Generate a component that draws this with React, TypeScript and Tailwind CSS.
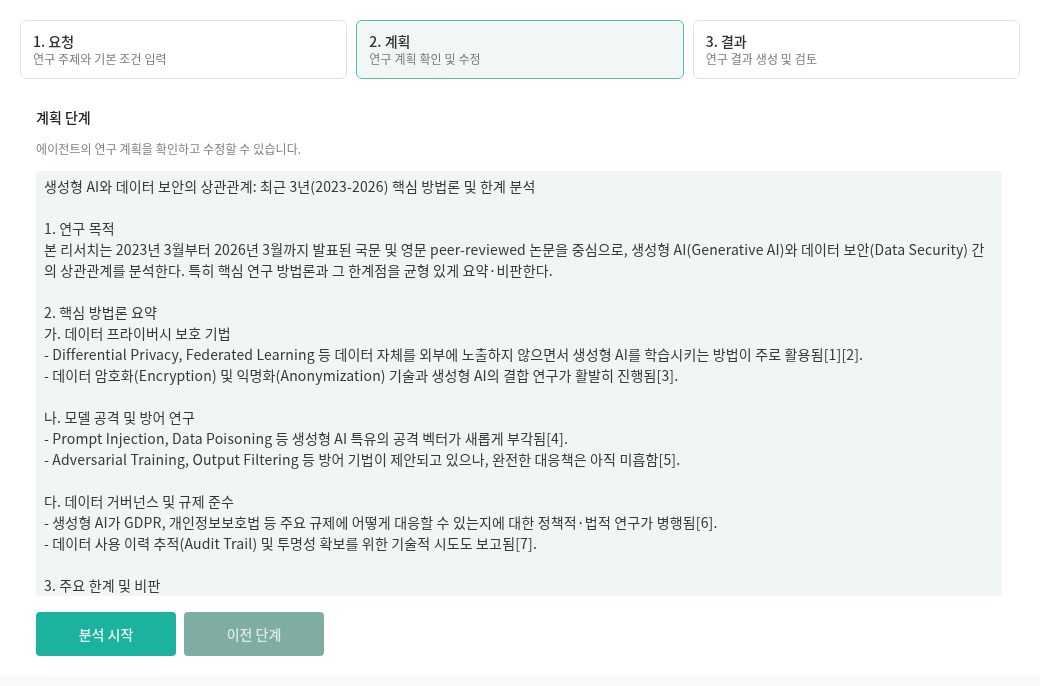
import { useState } from 'react';

const STEPS = [
  { title: '1. 요청', desc: '연구 주제와 기본 조건 입력' },
  { title: '2. 계획', desc: '연구 계획 확인 및 수정' },
  { title: '3. 결과', desc: '연구 결과 생성 및 검토' },
];

const PLAN = `생성형 AI와 데이터 보안의 상관관계: 최근 3년(2023-2026) 핵심 방법론 및 한계 분석

1. 연구 목적
본 리서치는 2023년 3월부터 2026년 3월까지 발표된 국문 및 영문 peer-reviewed 논문을 중심으로, 생성형 AI(Generative AI)와 데이터 보안(Data Security) 간의 상관관계를 분석한다. 특히 핵심 연구 방법론과 그 한계점을 균형 있게 요약·비판한다.

2. 핵심 방법론 요약
가. 데이터 프라이버시 보호 기법
- Differential Privacy, Federated Learning 등 데이터 자체를 외부에 노출하지 않으면서 생성형 AI를 학습시키는 방법이 주로 활용됨[1][2].
- 데이터 암호화(Encryption) 및 익명화(Anonymization) 기술과 생성형 AI의 결합 연구가 활발히 진행됨[3].

나. 모델 공격 및 방어 연구
- Prompt Injection, Data Poisoning 등 생성형 AI 특유의 공격 벡터가 새롭게 부각됨[4].
- Adversarial Training, Output Filtering 등 방어 기법이 제안되고 있으나, 완전한 대응책은 아직 미흡함[5].

다. 데이터 거버넌스 및 규제 준수
- 생성형 AI가 GDPR, 개인정보보호법 등 주요 규제에 어떻게 대응할 수 있는지에 대한 정책적·법적 연구가 병행됨[6].
- 데이터 사용 이력 추적(Audit Trail) 및 투명성 확보를 위한 기술적 시도도 보고됨[7].

3. 주요 한계 및 비판
- 대부분의 연구가 실험실 환경에 국한되어 실제 산업 현장 적용 사례가 부족함.
- 방어 기법의 성능 평가 기준이 통일되지 않아 비교가 어려움.`;

export default function App() {
  const [plan, setPlan] = useState(PLAN);
  const active = 1;

  return (
    <div className="min-h-screen bg-[#fafafa] font-['Noto_Sans_CJK_KR','Noto_Sans',sans-serif] text-[#333]">
      <div className="bg-white px-5 pt-5 pb-5">
        {/* Step indicator */}
        <div className="grid grid-cols-3 gap-[9px]">
          {STEPS.map((s, i) => (
            <div
              key={s.title}
              className={`rounded-md border px-3 pt-[10px] pb-[11px] ${
                i === active ? 'border-[#5cb8a5] bg-[#f1f7f5]' : 'border-[#e3e3e3] bg-white'
              }`}
            >
              <div className="text-[14px] leading-5 font-medium text-[#2f2f2f]">{s.title}</div>
              <div className="text-[12px] leading-4 tracking-[0.1px] text-[#7a7a7a]">{s.desc}</div>
            </div>
          ))}
        </div>

        {/* Plan section */}
        <div className="px-4 pt-[28px]">
          <h2 className="text-[14px] leading-5 font-medium text-[#222]">계획 단계</h2>
          <p className="mt-[14px] text-[12px] leading-4 tracking-[0.1px] text-[#808080]">
            에이전트의 연구 계획을 확인하고 수정할 수 있습니다.
          </p>
          <textarea
            value={plan}
            onChange={(e) => setPlan(e.target.value)}
            spellCheck={false}
            className="mt-[14px] block h-[425px] w-[966px] resize-none rounded-sm bg-[#f0f6f4] px-2 pt-[5px] text-[14px] leading-[21px] tracking-[0.16px] text-[#383838] outline-none [scrollbar-width:none]"
          />
          <div className="mt-4 flex gap-2">
            <button className="h-11 w-[140px] rounded bg-[#1bb39d] text-[14px] font-medium text-[#e6f7f3]">
              분석 시작
            </button>
            <button className="h-11 w-[140px] rounded bg-[#7fada3] text-[14px] font-medium text-[#d9e9e5]">
              이전 단계
            </button>
          </div>
        </div>
      </div>
    </div>
  );
}
